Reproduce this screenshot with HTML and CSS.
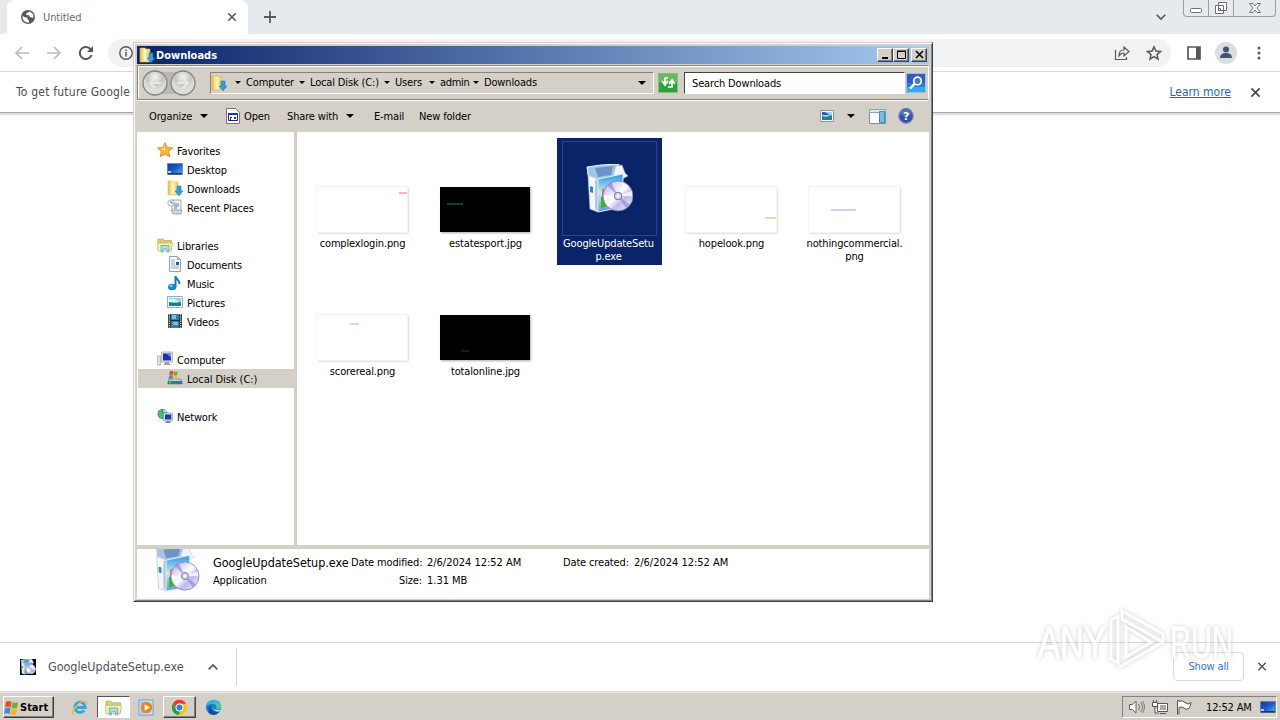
FILE: index.html
```
<!DOCTYPE html>
<html lang="en">
<head>
<meta charset="utf-8">
<title>Untitled</title>
<link rel="stylesheet" href="styles.css">
</head>
<body>
<svg class="defs" aria-hidden="true">
  <defs>
    <linearGradient id="gold" x2="1"><stop stop-color="#e7bb49"/><stop offset=".45" stop-color="#fff3ac"/><stop offset="1" stop-color="#ecca63"/></linearGradient>
    <linearGradient id="screen" x2="1" y2="1"><stop stop-color="#123a94"/><stop offset=".5" stop-color="#1c5bc4"/><stop offset="1" stop-color="#64afe9"/></linearGradient>
    <linearGradient id="panel" x2="0" y2="1"><stop stop-color="#3197e1"/><stop offset=".5" stop-color="#bbecf7"/><stop offset="1" stop-color="#5b96e5"/></linearGradient>
    <linearGradient id="disc" x2="1" y2="1"><stop stop-color="#a3a1df"/><stop offset=".28" stop-color="#dddcfb"/><stop offset=".48" stop-color="#fff"/><stop offset=".65" stop-color="#bdb9ef"/><stop offset="1" stop-color="#f7f7ff"/></linearGradient>
    <radialGradient id="ball" cy=".25"><stop stop-color="#f4f4f1"/><stop offset=".65" stop-color="#c6c5c1"/><stop offset="1" stop-color="#dddcd8"/></radialGradient>
    <symbol id="downloads" viewBox="0 0 16 16"><path fill="url(#gold)" stroke="#dcb75c" stroke-width=".6" d="M1 1h5l1 1h4v13H1z"/><path fill="#fff3b3" d="M5 2h2v12H5z"/><path fill="#319de4" stroke="#1678bd" stroke-width=".6" d="M10 6h4v5h2l-4 4.700L8 11h2z"/></symbol>
    <symbol id="star" viewBox="0 0 16 16"><path fill="#fbb832" stroke="#df8b36" d="M8 .8l2 4.700 5.500.5-4 3.300 1.300 5.500L8 12l-4.800 2.800 1.300-5.500L.5 6 6 5.500z"/><path fill="#ffe68c" d="M8 3L6.800 6.300 4 6.800 8 9z"/></symbol>
    <symbol id="desktop" viewBox="0 0 16 16"><path fill="url(#screen)" stroke="#6182ad" stroke-width=".8" d="M.5 2.500h15v11H.5z"/><path fill="#183969" d="M1 12h14v1.500H1z"/><path fill="#a5d3f1" d="M1 10h3v2H1z"/></symbol>
    <symbol id="recent" viewBox="0 0 16 16"><path fill="#edf3f8" stroke="#788d9b" stroke-width=".7" d="M5 1h9v11H5z"/><path fill="#ced9df" stroke="#7f8f98" stroke-width=".7" d="M4 11h11l-1 4H6z"/><path stroke="#667f95" d="M7 5h5M7 7h5M7 9h3"/><circle cx="4" cy="4" r="3.200" fill="#eef4f7" stroke="#8498a5" stroke-width=".7"/><path stroke="#547189" fill="none" stroke-width=".8" d="M4 2v2h2"/></symbol>
    <symbol id="library" viewBox="0 0 16 16"><path fill="#e5cb67" stroke="#bb9d45" stroke-width=".6" d="M1 2h5l1 1.500h7.500V13H1z"/><path fill="#b6d4a0" d="M2 4h11v3H2z"/><path fill="#fff1a4" stroke="#cfac4c" stroke-width=".6" d="M.5 6h15L14 14H1z"/><path fill="#a8e0f4" stroke="#489ec4" stroke-width=".7" d="M4 8.500h8V15h-2v-3H6v3H4z"/></symbol>
    <symbol id="document" viewBox="0 0 16 16"><path fill="#f9fcff" stroke="#778b9d" stroke-width=".8" d="M2.500.5h8l3 3v12h-11z"/><path fill="#93a8b5" d="M10 1v3h3z"/><path stroke="#7f97aa" stroke-width=".8" d="M4 4h4M4 6h4M4 8h4M4 10h8M4 12h8"/><path fill="#1664a2" d="M9 6h3v3H9z"/></symbol>
    <symbol id="music" viewBox="0 0 16 16"><path d="M8.500 12V1c0 4 4.500 3 4 8" fill="none" stroke="#1878bc" stroke-width="2"/><ellipse cx="5.200" cy="12" rx="4.200" ry="3.200" fill="#1685cc"/><ellipse cx="4" cy="10.800" rx="2" ry="1.200" fill="#77c7ef"/></symbol>
    <symbol id="picture" viewBox="0 0 16 16"><path fill="#fff" stroke="#8298a7" stroke-width=".8" d="M.5 2.500h15v11H.5z"/><path fill="#8bd3ef" d="M2 4h12v8H2z"/><path fill="#287899" d="M2 8l5 1 7-1v4H2z"/><path fill="#dff6fb" d="M2 5h6l4 3H2z"/></symbol>
    <symbol id="video" viewBox="0 0 16 16"><path fill="#24292b" d="M1 1h14v14H1z"/><path fill="#3480ad" d="M4 1h8v6H4zM4 8h8v7H4z"/><path fill="#76bfd9" d="M5 2h4v4H5zM6 9h5v3H6z"/><path stroke="#d7dedb" stroke-width="1.500" stroke-dasharray="1.200 1" d="M2.400 1v14M13.600 1v14"/></symbol>
    <symbol id="computer" viewBox="0 0 16 16"><path fill="#dfe2e2" stroke="#989f9f" stroke-width=".6" d="M.5 5h3v9h-3z"/><path fill="#e7e6e1" stroke="#8b8e96" stroke-width=".6" d="M4.500 1h11v10h-11z"/><path fill="#1731b4" d="M6 2.500h8v7H6z"/><path fill="#778de8" d="M9 2.500h5v4z"/><path fill="#999fb0" d="M8 11h4v1l2 2H6l2-2z"/></symbol>
    <symbol id="flag" viewBox="0 0 16 16"><path fill="#e84b24" d="M2 2q3-2 6 0L7 8Q4 6 1 8z"/><path fill="#70ad2c" d="M9 2q3 2 6 0l-1 6q-3 2-6 0z"/><path fill="#438ccd" d="M1 9q3-2 6 0l-1 6q-3-2-6 0z"/><path fill="#f8b71e" d="M8 9q3 2 6 0l-1 6q-3 2-6 0z"/></symbol>
    <symbol id="disk" viewBox="0 0 16 16"><path fill="#bdd0d1" stroke="#68868b" stroke-width=".7" d="M2 9h12l1.500 5H.5z"/><path fill="#287d9d" d="M1 11h14v3H1z"/><path fill="#8bdc50" d="M2 12h2v1H2z"/><use href="#flag" x="1" y="0" width="11" height="10"/></symbol>
    <symbol id="network" viewBox="0 0 16 16"><circle cx="5.500" cy="6" r="5" fill="#1683b2"/><path fill="#53ba61" d="M1 5q2-4 5-3L5 5l2 2-2 4Q1 9 1 5z"/><path fill="#bdd9f0" d="M6 2q3-1 4 2L7 5z"/><path fill="#dddde3" stroke="#8f8fa3" stroke-width=".6" d="M6.500 5h9v8h-9z"/><path fill="#1939bd" d="M8 6.500h6.300v5H8z"/><path fill="#818a9e" d="M9 13h4l1 2H8z"/></symbol>
    <symbol id="setup" viewBox="0 0 48 50"><path fill="#a5c3e5" stroke="#f2f7fb" d="M2 3l14-2 18-1-3 12-17 4-11-5z"/><path fill="#6e94c7" d="M10 4l18-2-2 9-13 2z"/><path fill="#eef5ff" stroke="#aabbcf" stroke-width=".5" d="M31 2l6-1 3 8 3 3-8 4-7-4z"/><path fill="#f5f7fb" stroke="#b4bcc9" stroke-width=".7" d="M3 11l10 4v33l-8-3z"/><path fill="#bbc4d1" d="M10 16l3-1v32l-3-2z"/><path fill="url(#panel)" stroke="#d6eef9" d="M13 15l25-5v33l-25 5z"/><path fill="#ef7c20" d="M17 25l9-1v8l-9 2z"/><path fill="#48ad22" d="M16 33l11-2v10l-11 3z"/><path fill="#208bd6" d="M5 22l3 1v6l-3-1z"/><circle cx="33" cy="32" r="15" fill="url(#disc)" stroke="#7f7ba8" stroke-width=".8"/><path fill="#8f84d3" opacity=".65" d="M33 32L22 21l4-3zM33 32l8 12 4-3z"/><path fill="#fff" opacity=".8" d="M33 32l-14 4v-5zM33 32l14-5v5z"/><circle cx="33" cy="32" r="3.800" fill="#d4d2e7" stroke="#777591"/><circle cx="33" cy="32" r="1.400" fill="#fff"/></symbol>
    <symbol id="x" viewBox="0 0 12 12"><path fill="none" stroke="currentColor" stroke-width="1.900" d="M1.500 1.500l9 9m0-9l-9 9"/></symbol>
    <symbol id="back" viewBox="0 0 16 16"><path fill="none" stroke="currentColor" stroke-width="1.700" d="M15 8H2m6-6L2 8l6 6"/></symbol>
  </defs>
</svg>

<div class="desktop">
  <main class="browser">
    <header class="tabstrip">
      <div class="tab">
        <svg class="globe" viewBox="0 0 14 14"><circle cx="7" cy="7" r="7" fill="#555a60"/><path fill="#fff" d="M1.500 6l3 1.500 2 .3v1.600l1.500 1v2Q3 13 1.500 8zM8 1.600L6.500 3 5 3.600V5l3 .3 1 1.800 3.500.6Q13 3 8 1.600z"/></svg>
        <span class="tab-title">Untitled</span>
        <svg class="tab-close"><use href="#x"/></svg>
      </div>
      <svg class="plus" viewBox="0 0 12 12"><path stroke="currentColor" stroke-width="1.800" d="M6 0v12M0 6h12"/></svg>
      <svg class="tab-chevron" viewBox="0 0 10 6"><path fill="none" stroke="currentColor" stroke-width="1.600" d="M.7.7L5 5 9.300.7"/></svg>
      <div class="browser-controls">
        <i><svg viewBox="0 0 14 14"><rect x="1.500" y="7.500" width="11" height="4" rx="1" fill="#fff" stroke="currentColor"/></svg></i><i><svg viewBox="0 0 14 14"><path fill="#fff" stroke="currentColor" d="M4.500 1.500h8v8h-8zM1.500 4.500h8v8h-8zM4.500 7.500h2v2h-2z"/></svg></i><i><svg viewBox="0 0 14 14"><path fill="#fff" stroke="currentColor" d="M1.500 2.500H5L7 5l2-2.500h3.500L9 7l3.500 4.500H9L7 9l-2 2.500H1.500L5 7z"/></svg></i>
      </div>
    </header>
    <nav class="toolbar">
      <svg class="nav-icon muted"><use href="#back"/></svg>
      <svg class="nav-icon muted flip"><use href="#back"/></svg>
      <svg class="nav-icon" viewBox="0 0 16 16"><path fill="none" stroke="currentColor" stroke-width="2" d="M13.500 10A6 6 0 1 1 12 3.700L14 6"/><path fill="currentColor" d="M15 1v6H9z"/></svg>
      <div class="omnibox">
        <svg class="info" viewBox="0 0 14 14"><circle cx="7" cy="7" r="6.200" fill="none" stroke="currentColor" stroke-width="1.400"/><path stroke="currentColor" stroke-width="1.500" d="M7 6v4.500M7 3.500V5"/></svg>
        <svg class="share" viewBox="0 0 16 16"><path fill="none" stroke="currentColor" stroke-width="1.200" d="M1.500 5v9.500h11V12M5 11q0-6 5-6V2l5 4.500L10 11V8Q7 8 5 11z"/></svg>
        <svg class="bookmark" viewBox="0 0 16 16"><path fill="none" stroke="currentColor" stroke-width="1.500" d="M8 1.800l1.900 4.200 4.600.5L11 9.600l1 4.500-4-2.400-4 2.400 1-4.500-3.500-3.100 4.600-.5z"/></svg>
      </div>
      <svg class="side-icon" viewBox="0 0 14 14"><path fill="none" stroke="currentColor" stroke-width="1.700" d="M1 1h12v12H1z"/><path fill="currentColor" d="M9 1h4v12H9z"/></svg>
      <svg class="avatar" viewBox="0 0 22 22"><circle cx="11" cy="11" r="11" fill="#dadde2"/><circle cx="11" cy="7.500" r="3" fill="#46536c"/><path fill="#46536c" d="M5 16q0-5 6-5t6 5z"/></svg>
      <svg class="menu" viewBox="0 0 4 14"><g fill="currentColor"><circle cx="2" cy="2" r="1.500"/><circle cx="2" cy="7" r="1.500"/><circle cx="2" cy="12" r="1.500"/></g></svg>
    </nav>
    <div class="infobar"><span>To get future Google</span><a>Learn more</a><svg class="close"><use href="#x"/></svg></div>
    <div class="page"></div>
    <footer class="shelf">
      <div class="shelf-item"><span class="shelf-thumb"><svg><use href="#setup"/></svg></span><span class="shelf-name">GoogleUpdateSetup.exe</span><svg class="up" viewBox="0 0 10 6"><path fill="none" stroke="currentColor" stroke-width="1.700" d="M.7 5.300L5 1l4.300 4.300"/></svg></div>
      <button class="show-all">Show all</button><svg class="close"><use href="#x"/></svg>
    </footer>
  </main>

  <footer class="taskbar">
    <button class="start"><svg><use href="#flag"/></svg><b>Start</b></button>
    <span class="task ie"><svg viewBox="0 0 18 18"><path fill="none" stroke="#35a5df" stroke-width="3" d="M14 12a5.500 5.500 0 1 1 1-3H4"/><path fill="none" stroke="#edbd3e" stroke-width="1.500" d="M3 16C-2 16 8 2 15 2q3 0 1 4"/></svg></span>
    <span class="task folder active"><svg><use href="#library"/></svg></span>
    <span class="task media"><svg viewBox="0 0 18 18"><path fill="#c3dff2" stroke="#6a9fce" d="M1 1h15v16H1z"/><path fill="#8fbde2" d="M3 3h4v12H3z"/><circle cx="9" cy="9" r="6" fill="#ef8418"/><path fill="#fff" d="M7 5.500v7L12.500 9z"/></svg></span>
    <span class="task chrome raised"><svg viewBox="0 0 18 18"><circle cx="9" cy="9" r="8" fill="#fbc116"/><path fill="#df3e2e" d="M2 5a8 8 0 0 1 14 0H9L6 10z"/><path fill="#269d4b" d="M2 5l4 6q2 2 4 2l-2 4A8 8 0 0 1 2 5z"/><circle cx="9" cy="9" r="4.200" fill="#fff"/><circle cx="9" cy="9" r="3.200" fill="#347de0"/></svg></span>
    <span class="task edge"><svg viewBox="0 0 18 18"><circle cx="9" cy="9" r="8" fill="#1682ce"/><path fill="#49c99b" d="M1 8C2-2 18-1 17 8q0 4-5 3 1-6-4-6-5 0-7 3z"/><path fill="#35b5e4" d="M1 8Q2 1 9 1q5 0 7 4-4-2-8 0-5 0-7 3z"/><path fill="#164d9b" d="M7 6q-3 7 8 8Q8 20 4 14q-2-5 3-8z"/><path fill="#d8f2f5" d="M10 8q-3 4 4 4 2 0 3-2-1 4-5 3-5-1-2-5z"/></svg></span>
    <div class="tray">
      <svg viewBox="0 0 18 16"><path fill="#fff" stroke="#626469" d="M1.500 5.500h3L8 2v12l-3.500-3.500h-3z"/><path fill="none" stroke="#777" d="M10.500 5q2 3 0 6M12.500 3q4 5 0 10M14.500 2q4 6 0 12"/></svg>
      <svg viewBox="0 0 18 16"><path fill="#fff" stroke="#555" d="M5.500 4.500h10v8h-10zM8 14.500h6M1.500 1v3M4.500 1v3M.5 3.500h5v4h-5zM3 8v6h4"/><path fill="#aaa" d="M8 6h6v5H8z"/></svg>
      <svg viewBox="0 0 18 16"><path fill="#fff" stroke="#555" d="M1.500 15V1.500H3v1q3-2 6 1t6 0q0 3-2 6-3 2-6-1-2-1-4 0V15z"/></svg>
      <time>12:52 AM</time><svg class="tray-desktop"><use href="#desktop"/></svg>
    </div>
  </footer>

  <section class="window">
    <header class="titlebar"><svg><use href="#downloads"/></svg><b>Downloads</b><div class="win-controls"><i><svg viewBox="0 0 10 10"><path fill="#000" d="M1 7h6v2H1z"/></svg></i><i><svg viewBox="0 0 10 10"><path fill="none" stroke="#000" d="M.5 1.500h8v7h-8zM0 1h9"/></svg></i><i class="last"><svg viewBox="0 0 10 10"><path stroke="#000" stroke-width="1.600" d="M1 1l7 7m0-7L1 8"/></svg></i></div></header>
    <nav class="address-row">
      <svg class="travel" viewBox="0 0 54 28"><path fill="#bbb9b4" d="M14 3h26v22H14z"/><g fill="url(#ball)" stroke="#85847f" stroke-width="1.300"><circle cx="13" cy="14" r="12"/><circle cx="41" cy="14" r="12"/></g><g fill="none" stroke="#e9e8e4" stroke-width="2"><path d="M19 14H8m5-5l-5 5 5 5"/><path d="M35 14h11m-5-5l5 5-5 5"/></g></svg>
      <div class="address"><svg class="address-folder"><use href="#downloads"/></svg><span class="crumb computer">Computer</span><span class="crumb local">Local Disk (C:)</span><span class="crumb users">Users</span><span class="crumb admin">admin</span><span class="crumb current">Downloads</span><i class="arrow"></i></div>
      <svg class="refresh" viewBox="0 0 20 20"><path fill="#2ba53b" stroke="#8bb886" d="M.5.500h19v19H.5z"/><path fill="#68b95d" d="M1 1h18v8H1z"/><path fill="none" stroke="#fff" stroke-width="1.700" d="M10 5H7v6M4 8l3 4 3-4M10 14h4V8m-3 3l3-4 3 4"/></svg>
      <div class="search">Search Downloads</div>
      <svg class="search-button" viewBox="0 0 20 20"><path fill="#2582d7" stroke="#9dbddd" d="M.5.500h19v19H.5z"/><path fill="#315cbd" d="M1 1h18v9H1z"/><path fill="#42baf0" opacity=".7" d="M1 14h18v5H1z"/><circle cx="11.500" cy="8" r="3.800" fill="#4278cd" stroke="#fff" stroke-width="1.800"/><path stroke="#fff" stroke-width="2.400" d="M8.500 11L4 15.500"/></svg>
    </nav>
    <div class="commands"><span class="organize">Organize</span><i class="arrow"></i><svg class="open-icon" viewBox="0 0 14 16"><path fill="#fff" stroke="#777" d="M.5.500h9l4 4v11H.5z"/><path fill="#fff" stroke="#14256c" d="M2.500 5.500h9v7h-9z"/><path fill="#173ca6" d="M2 5h10v2H2z"/><path fill="#26356b" d="M4 9h2v1h-1v2H4zM8 9h2v2H8z"/></svg><span class="open">Open</span><span class="share-with">Share with</span><i class="arrow"></i><span class="email">E-mail</span><span class="new">New folder</span><svg class="view-icon" viewBox="0 0 14 12"><path fill="#fff" stroke="#8298a7" d="M.5.500h13v11H.5z"/><path fill="#9bdaf0" d="M2 2h10v8H2z"/><path fill="#287899" d="M2 6l4 1 6-2v5H2z"/><path fill="#315cae" d="M2 2h3l5 3H2z"/></svg><i class="arrow view-arrow"></i><svg class="preview" viewBox="0 0 17 15"><path fill="#fff" stroke="#6d91ba" d="M.5.500h16v14H.5z"/><path fill="#d9eaff" stroke="#7fa4cb" d="M.5.500h16v3H.5z"/><path fill="#77bee2" stroke="#4e8cb5" d="M10.500 2.500h5v11h-5z"/></svg><svg class="help" viewBox="0 0 16 16"><circle cx="8" cy="8" r="7.300" fill="#3151aa" stroke="#8793b4" stroke-width="1.200"/><path fill="#5471bd" d="M2 6a6 6 0 0 1 12 0q-6 4-12 0z"/><text x="8" y="12" text-anchor="middle">?</text></svg></div>
    <div class="explorer">
      <aside class="tree">
        <div class="branch"><svg><use href="#star"/></svg>Favorites</div>
        <div class="leaf"><svg><use href="#desktop"/></svg>Desktop</div>
        <div class="leaf"><svg><use href="#downloads"/></svg>Downloads</div>
        <div class="leaf"><svg><use href="#recent"/></svg>Recent Places</div>
        <div class="branch spaced"><svg><use href="#library"/></svg>Libraries</div>
        <div class="leaf"><svg><use href="#document"/></svg>Documents</div>
        <div class="leaf"><svg><use href="#music"/></svg>Music</div>
        <div class="leaf"><svg><use href="#picture"/></svg>Pictures</div>
        <div class="leaf"><svg><use href="#video"/></svg>Videos</div>
        <div class="branch spaced"><svg><use href="#computer"/></svg>Computer</div>
        <div class="leaf selected"><svg><use href="#disk"/></svg>Local Disk (C:)</div>
        <div class="branch spaced"><svg><use href="#network"/></svg>Network</div>
      </aside>
      <div class="files">
        <div class="file"><svg class="thumb" viewBox="0 0 90 45"><path stroke="#f3a1b1" stroke-width="1.500" d="M82 6h8"/></svg><span>complexlogin.png</span></div>
        <div class="file"><svg class="thumb dark" viewBox="0 0 90 45"><path stroke="#1c5848" stroke-width="1.500" stroke-dasharray="3 .3" d="M7 17h16"/></svg><span>estatesport.jpg</span></div>
        <div class="file chosen"><div class="setup-frame"><svg><use href="#setup"/></svg></div><span>GoogleUpdateSetu<br>p.exe</span></div>
        <div class="file"><svg class="thumb" viewBox="0 0 90 45"><path stroke="#bfc981" stroke-width="1.200" d="M79 31h11"/></svg><span>hopelook.png</span></div>
        <div class="file"><svg class="thumb" viewBox="0 0 90 45"><path stroke="#c0bfd9" stroke-width="1.400" stroke-dasharray="3 .3" d="M22 23h25"/></svg><span>nothingcommercial.<br>png</span></div>
        <div class="file"><svg class="thumb" viewBox="0 0 90 45"><path stroke="#e3b0be" stroke-width="1.200" d="M33 9h9"/></svg><span>scorereal.png</span></div>
        <div class="file"><svg class="thumb dark" viewBox="0 0 90 45"><path stroke="#252525" stroke-width="1.500" d="M21 36h8"/></svg><span>totalonline.jpg</span></div>
      </div>
    </div>
    <footer class="details"><svg><use href="#setup"/></svg><span class="detail-name">GoogleUpdateSetup.exe</span><span class="label">Date modified:</span><span>2/6/2024 12:52 AM</span><span class="created">Date created:</span><span>2/6/2024 12:52 AM</span><span class="type">Application</span><span class="label">Size:</span><span>1.31 MB</span></footer>
  </section>

  <svg class="watermark" viewBox="0 0 204 70"><g class="mark-text"><text x="2" y="54" textLength="68" lengthAdjust="spacingAndGlyphs">ANY</text><text x="134" y="54" textLength="63" lengthAdjust="spacingAndGlyphs">RUN</text></g><g class="mark-logo"><path d="M75 16l7-4v47l-7-4zM86 7l41 23v8L86 15zM90 23l25 15-25 15z"/><path d="M82 64l45-26"/></g></svg>
</div>
</body>
</html>
```
FILE: styles.css
```
* { box-sizing: border-box; }
body { margin: 0; overflow: hidden; font: 11px/13px "DejaVu Sans Condensed", "DejaVu Sans", sans-serif; font-stretch: condensed; letter-spacing: -.15px; color: #000; }
button { font: inherit; letter-spacing: inherit; color: inherit; padding: 0; }
svg { display: block; flex: none; width: 16px; height: 16px; overflow: visible; }
i { flex: none; }
.defs { position: absolute; width: 0; height: 0; }
.desktop { position: relative; width: 1280px; height: 720px; display: flex; flex-direction: column; overflow: hidden; background: #fff; }
.browser { height: 692px; display: flex; flex-direction: column; color: #55585c; }
.tabstrip { height: 34px; display: flex; align-items: flex-start; background: #e7eaed; }
.tab { width: 241px; height: 34px; margin-left: 7px; padding-left: 14px; display: flex; align-items: center; background: #fff; border-radius: 8px 8px 0 0; }
.globe { width: 14px; height: 14px; }
.tab-title { margin-left: 8px; width: 184px; color: #66696d; letter-spacing: -.1px; }
.tab-close { width: 10px; height: 10px; }
.plus { width: 12px; height: 12px; margin: 11px 0 0 16px; }
.tab-chevron { width: 10px; height: 6px; margin: 14px 0 0 880px; }
.browser-controls { display: flex; margin-left: 17px; height: 17px; width: 93px; border: 1px solid #9a9ea3; border-top: 0; border-radius: 0 0 4px 4px; }
.browser-controls i { width: 25px; display: flex; align-items: center; justify-content: center; border-right: 1px solid #9a9ea3; }
.browser-controls i:last-child { width: 42px; border: 0; }
.browser-controls svg { width: 14px; height: 14px; color: #6d7075; }
.toolbar { height: 38px; display: flex; align-items: center; padding-left: 14px; border-bottom: 1px solid #d5d7d9; }
.nav-icon { margin-right: 16px; width: 16px; height: 16px; }
.muted { color: #babcbe; }
.flip { transform: scaleX(-1); }
.omnibox { width: 1063px; height: 28px; margin-left: -2px; padding-left: 11px; border-radius: 14px; display: flex; align-items: center; background: #f0f2f4; }
.info { width: 14px; height: 14px; }
.share { margin-left: 981px; }
.bookmark { margin-left: 16px; }
.side-icon { width: 14px; height: 14px; margin-left: 16px; }
.avatar { width: 22px; height: 22px; margin-left: 14px; }
.menu { width: 4px; height: 14px; margin-left: 20px; }
.infobar { height: 41px; flex: none; padding-left: 16px; display: flex; align-items: center; border-bottom: 1px solid #a6a6a6; box-shadow: 0 2px 1px #ddd; color: #4c4c4c; letter-spacing: .05px; font-size: 12px; }
.infobar span { letter-spacing: .22px; }
.infobar a { margin-left: auto; margin-right: 1px; color: #2865b3; text-decoration: underline; letter-spacing: 0; }
.close { width: 11px; height: 11px; margin: 0 19px 0 18px; }
.page { flex: 1; }
.shelf { height: 50px; border-top: 1px solid #d6d8da; display: flex; align-items: center; border-bottom: 1px solid #d9d9d9; padding-bottom: 1px; }
.shelf-item { height: 38px; width: 237px; padding-left: 20px; display: flex; align-items: center; border-right: 1px solid #d3d3d3; }
.shelf-thumb { width: 16px; height: 16px; background: #000; }
.shelf-thumb svg { width: 16px; height: 16px; }
.shelf-name { margin-left: 12px; width: 160px; font-size: 12.5px; letter-spacing: -.05px; color: #4f5358; }
.up { width: 10px; height: 6px; }
.show-all { margin-left: auto; width: 71px; height: 29px; border: 1px solid #d9dce0; border-radius: 4px; background: #fff; color: #3073d3; }
.shelf .close { margin: 0 13px 0 13px; width: 10px; }
.taskbar { height: 28px; padding: 3px 3px 2px 3px; display: flex; background: #d4d0c8; border-top: 1px solid #e9e7e2; }
.start { width: 51px; height: 22px; display: flex; align-items: center; gap: 1px; background: #d4d0c8; border: 1px solid; border-color: #fff #404040 #404040 #fff; box-shadow: inset -1px -1px #85827c; padding-left: 0; letter-spacing: 0; }
.start svg { width: 15px; height: 15px; }
.task { width: 33px; height: 22px; display: flex; justify-content: center; align-items: center; }
.task svg { width: 17px; height: 17px; }
.ie { margin-left: 9px; }
.active { background: #fff; border: 1px solid; border-color: #555 #fff #fff #555; margin-left: 1px; }
.raised { border: 1px solid; border-color: #fff #444 #444 #fff; box-shadow: inset -1px -1px #85827c; }
.edge { margin-left: 1px; }
.tray { margin-left: auto; width: 155px; height: 22px; border: 1px solid; border-color: #85827c #fff #fff #85827c; display: flex; align-items: center; padding-left: 5px; gap: 6px; }
.tray svg { width: 18px; height: 16px; }
.tray time { width: 48px; margin-left: 6px; white-space: nowrap; }
.tray .tray-desktop { width: 16px; margin-left: 0; }

.window { position: absolute; left: 133px; top: 42px; width: 800px; height: 560px; border: 1px solid; border-color: #d4d0c8 #404040 #404040 #d4d0c8; box-shadow: inset 1px 1px #fff, inset -1px -1px #808080; padding: 3px; background: #d4d0c8; }
.titlebar { height: 18px; display: flex; align-items: center; padding-left: 2px; background: linear-gradient(90deg, #0a246a, #a6caf0); color: #fff; letter-spacing: 0; }
.titlebar b { margin-left: 1px; }
.win-controls { display: flex; margin-left: auto; padding-right: 2px; }
.win-controls i { width: 16px; height: 14px; padding: 1px 0 0 3px; background: #d4d0c8; border: 1px solid; border-color: #fff #404040 #404040 #fff; box-shadow: inset -1px -1px #808080; }
.win-controls svg { width: 10px; height: 10px; }
.win-controls .last { margin-left: 2px; }
.address-row { height: 35px; display: flex; align-items: center; margin-top: 1px; padding: 0 1px 0 3px; border: 1px solid; border-color: #85827c #fff #85827c #85827c; box-shadow: inset 1px 1px #fff, 0 1px #fff; }
.travel { width: 54px; height: 28px; margin-left: 1px; }
.address { margin-left: 14px; width: 444px; height: 22px; border: 1px solid; border-color: #85827c #fff #fff #85827c; display: flex; align-items: center; }
.address-folder { margin-right: 7px; }
.crumb { display: flex; align-items: center; white-space: nowrap; flex: none; }
.crumb::before, .arrow { content: ""; width: 0; height: 0; border: 3px solid transparent; border-top-color: #000; border-bottom: 0; }
.crumb::before { margin: 0 5px 0 1px; }
.computer { width: 64px; }
.local { width: 85px; }
.users { width: 45px; }
.admin { width: 44px; letter-spacing: -.3px; }
.arrow { border-left-width: 4px; border-right-width: 4px; border-top-width: 4px; }
.address .arrow { margin-left: auto; margin-right: 7px; }
.refresh { width: 20px; height: 20px; margin-left: 4px; }
.search { width: 221px; height: 22px; margin-left: 6px; padding: 4px 7px; background: #fff; border: 1px solid; border-color: #444 #fff #fff #444; }
.search-button { width: 20px; height: 20px; margin-left: 1px; }
.commands { height: 32px; display: flex; align-items: center; padding-left: 12px; }
.organize { width: 51px; }
.open-icon { width: 14px; margin-left: 18px; }
.open { width: 43px; margin-left: 4px; }
.share-with { width: 59px; white-space: nowrap; }
.email { width: 45px; margin-left: 20px; }
.new { width: 80px; }
.view-icon { width: 14px; height: 12px; margin-left: 321px; }
.view-arrow { margin-left: 13px; }
.preview { width: 17px; height: 15px; margin-left: 14px; }
.help { margin-left: 12px; }
.help text { fill: #fff; font: bold 11px "DejaVu Sans", sans-serif; }
.explorer { height: 413px; display: flex; background: #fff; }
.tree { width: 160px; height: 413px; padding-top: 9px; border-right: 3px solid #d4d0c8; }
.tree div { height: 19px; display: flex; align-items: center; gap: 4px; padding: 1px 0 0 20px; }
.tree svg { margin-top: -2px; }
.tree .leaf { padding-left: 30px; }
.tree .spaced { margin-top: 19px; }
.tree .selected { background: #d4d0c8; margin-left: 1px; padding-left: 29px; letter-spacing: -.05px; }
.files { padding: 6px 0 0 14px; display: grid; grid-template-columns: repeat(5, 105px); grid-template-rows: 127px 127px; column-gap: 18px; row-gap: 1px; }
.file { padding-top: 49px; text-align: center; }
.thumb { width: 90px; height: 45px; margin: 0 auto 5px 6px; background: #fff; box-shadow: 1px 1px 2px 0 #aaa; outline: 1px solid #f4f4f4; }
.thumb.dark { background: #000; outline: 0; }
.file span { display: block; margin-left: -2px; }
.file.chosen { padding-top: 3px; background: #0a246a; color: #fff; }
.setup-frame { width: 95px; height: 95px; margin: 0 auto 1px; border: 1px solid #2d477e; display: flex; align-items: center; justify-content: center; }
.setup-frame svg { width: 48px; height: 50px; margin-left: -2px; }
.details { height: 54px; border-top: 4px solid #d4d0c8; padding: 4px 0 0 17px; background: #fff; display: grid; grid-template-columns: 59px 138px 75px 137px 71px 120px; grid-template-rows: 18px 18px; align-items: center; white-space: nowrap; overflow: hidden; }
.details > svg { width: 47px; height: 47px; grid-row: 1 / 3; margin: -3px 0 0 -1px; }
.details .label { text-align: right; padding-right: 4px; }
.detail-name { font-size: 12.5px; letter-spacing: -.05px; }
.details .label + span { padding-left: 1px; }
.details .label + span, .details .created + span { letter-spacing: -.02px; }
.watermark { position: absolute; left: 1036px; top: 604px; width: 204px; height: 70px; opacity: .6; filter: drop-shadow(0 0 2px #aaa); }
.mark-text { font: 45px "Liberation Sans", sans-serif; letter-spacing: 0; fill: #fff; stroke: #fff; stroke-width: 1px; }
.mark-logo { fill: none; stroke: #fff; stroke-width: 3px; }
```
